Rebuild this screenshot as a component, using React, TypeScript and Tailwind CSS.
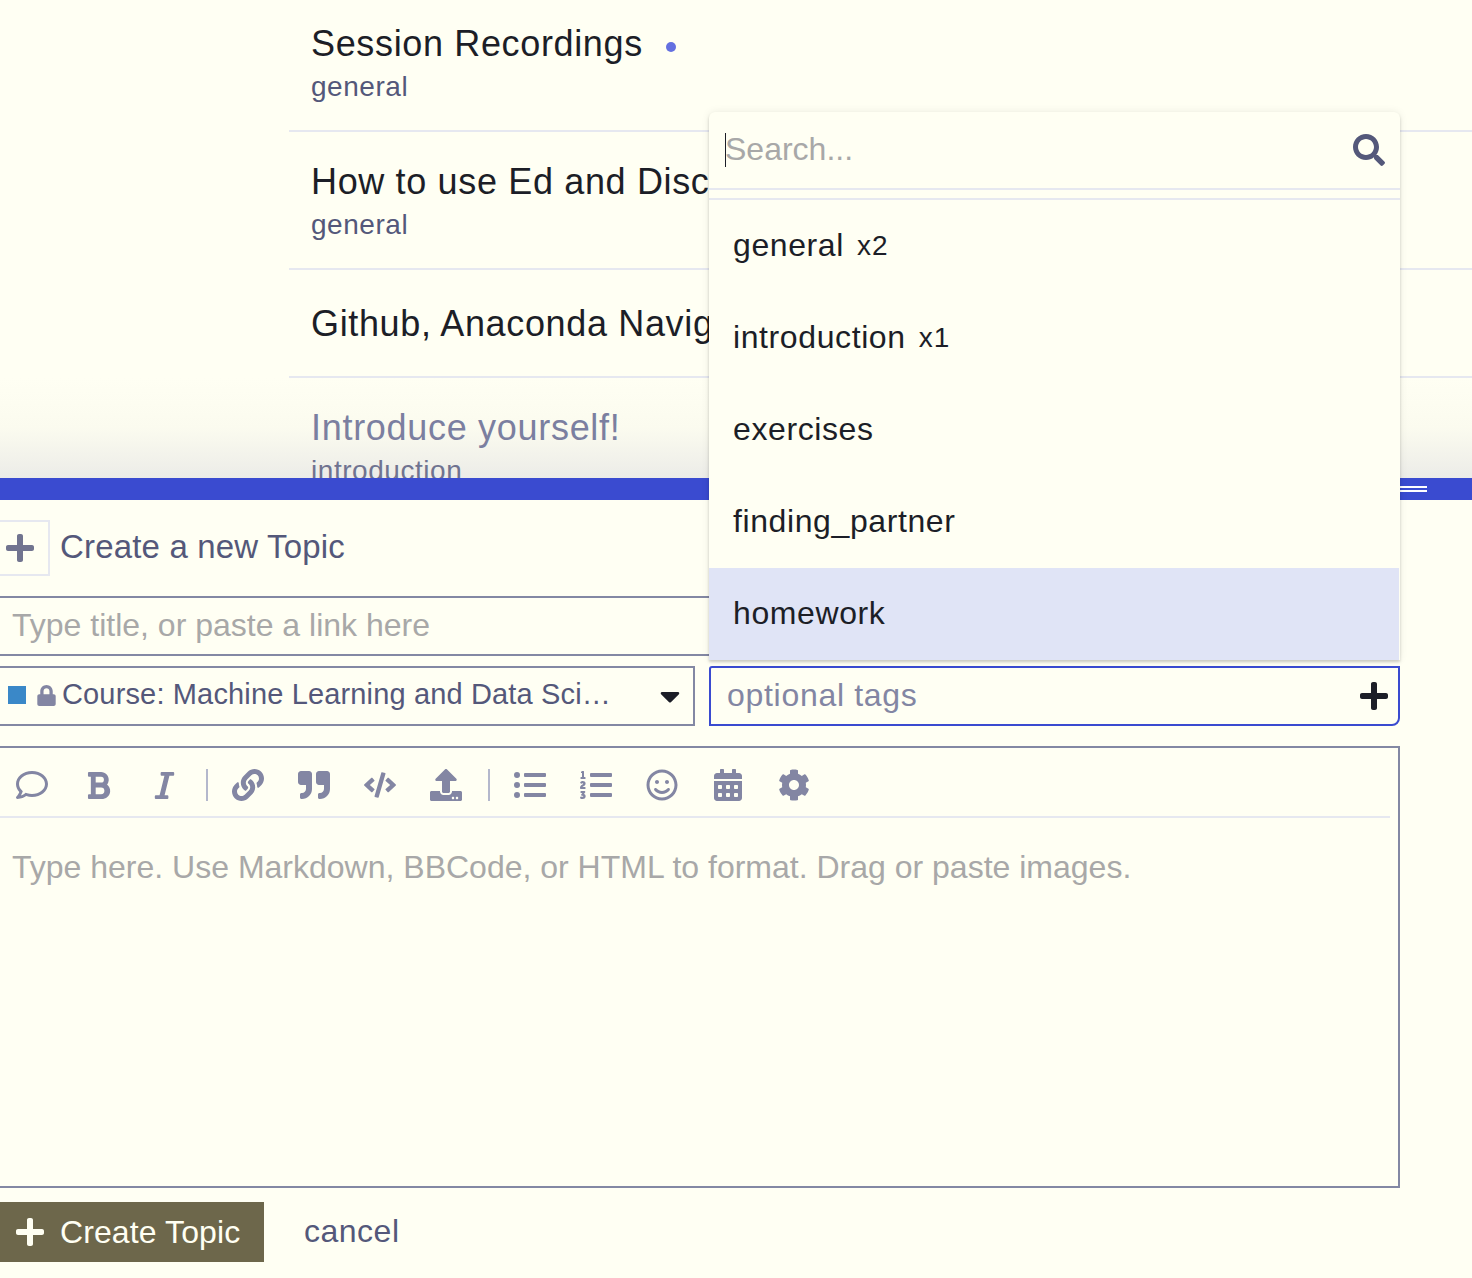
import type { ReactNode } from "react";
import {
  FaBold,
  FaCalendarAlt,
  FaCaretDown,
  FaCode,
  FaCog,
  FaItalic,
  FaLink,
  FaListOl,
  FaListUl,
  FaLock,
  FaPlus,
  FaQuoteRight,
  FaRegComment,
  FaRegSmile,
  FaSearch,
  FaUpload,
} from "react-icons/fa";

const tags = [
  { name: "general", count: "x2" },
  { name: "introduction", count: "x1" },
  { name: "exercises" },
  { name: "finding_partner" },
  { name: "homework", active: true },
];

const ToolButton = ({ children }: { children: ReactNode }) => (
  <button className="flex h-full w-[66px] items-center justify-center text-[#8386a3]">{children}</button>
);

const Separator = () => <div className="ml-[9px] mr-[7px] h-8 w-0.5 bg-[#b4b8cc]" />;

const TopicRow = ({ title, tag, unread, className }: { title: string; tag?: string; unread?: boolean; className: string }) => (
  <div className={`border-b-2 border-[#e6e8f0] pl-[22px] ${className}`}>
    <div className="flex items-center whitespace-nowrap text-[36px] leading-[46px] tracking-[0.65px] text-[#1c1e27]">
      {title}
      {unread && <span className="ml-[23px] mt-[6px] size-[10px] rounded-full bg-[#6470e0]" />}
    </div>
    {tag && <div className="mt-[3px] text-[28px] leading-[34px] tracking-[0.55px] text-[#54587a]">{tag}</div>}
  </div>
);

const App = () => {
  return (
    <div className="relative h-[1278px] w-[1472px] overflow-hidden bg-[#fffff3] font-['Liberation_Sans',Arial,sans-serif]">
      <div className="relative h-[478px] overflow-hidden pl-[289px]">
        <div className="absolute inset-x-0 bottom-0 h-[100px] bg-linear-to-b from-[#fffff3] via-[#fbfbef] to-[#ecece8]" />
        <TopicRow title="Session Recordings" tag="general" unread className="relative h-[132px] pt-[21px]" />
        <TopicRow title="How to use Ed and Discussion" tag="general" className="relative h-[138px] pt-[27px]" />
        <TopicRow title="Github, Anaconda Navigator" className="relative h-[108px] pt-[31px]" />
        <div className="relative pl-[22px] pt-[27px]">
          <div className="text-[36px] leading-[46px] tracking-[0.7px] text-[#7b7fa0]">Introduce yourself!</div>
          <div className="mt-[3px] text-[28px] leading-[34px] tracking-[0.55px] text-[#6f7390]">introduction</div>
        </div>
      </div>

      <div className="relative h-[22px] bg-[#3a4bd0]">
        <div className="absolute left-[1300px] top-[8px] h-[2px] w-[127px] bg-white" />
        <div className="absolute left-[1300px] top-[12px] h-[2px] w-[127px] bg-white" />
      </div>

      <div className="w-[1400px]">
        <div className="flex h-[96px] items-start pt-[20px]">
          <div className="flex h-14 w-[50px] items-center justify-center border-y-2 border-r-2 border-[#e6e8f0] pr-2 text-[#71748f]">
            <FaPlus size={32} />
          </div>
          <span className="ml-[10px] text-[33px] leading-[54px] tracking-[0.17px] text-[#54587a]">Create a new Topic</span>
        </div>

        <div className="flex h-[60px] items-center border-y-2 border-[#8388a3] pb-[2px] pl-3 text-[32px] text-[#a8a8a8]">
          Type title, or paste a link here
        </div>

        <div className="mt-[10px] flex h-[60px] gap-[14px]">
          <div className="flex w-[695px] items-center border-y-2 border-r-2 border-[#8388a3] pl-2 pr-[7px]">
            <span className="mb-[2px] size-[18px] shrink-0 bg-[#3a88c8]" />
            <FaLock size={21} className="mb-[2px] ml-[10px] shrink-0 text-[#8386a3]" />
            <span className="mb-[3px] ml-[5px] flex-1 truncate text-[29px] tracking-[0.15px] text-[#54587a]">
              Course: Machine Learning and Data Science
            </span>
            <FaCaretDown size={32} className="ml-[38px] shrink-0 text-[#1c1e27]" />
          </div>
          <div className="flex flex-1 items-center justify-between rounded-br-lg rounded-tl-[3px] border-2 border-[#3a4bd0] pl-4 pr-[8px]">
            <span className="mb-[2px] text-[32px] tracking-[0.7px] text-[#8386a3]">optional tags</span>
            <FaPlus size={32} className="text-[#1c1e27]" />
          </div>
        </div>

        <div className="mt-5 h-[442px] border-y-2 border-r-2 border-[#8388a3] pr-2">
          <div className="-ml-px flex h-[70px] items-center border-b-2 border-[#e6e8f0] pt-[6px]">
            <ToolButton><FaRegComment size={32} /></ToolButton>
            <ToolButton><FaBold size={31} /></ToolButton>
            <ToolButton><FaItalic size={31} /></ToolButton>
            <Separator />
            <ToolButton><FaLink size={32} /></ToolButton>
            <ToolButton><FaQuoteRight size={32} /></ToolButton>
            <ToolButton><FaCode size={32} /></ToolButton>
            <ToolButton><FaUpload size={32} /></ToolButton>
            <Separator />
            <ToolButton><FaListUl size={32} /></ToolButton>
            <ToolButton><FaListOl size={32} /></ToolButton>
            <ToolButton><FaRegSmile size={32} /></ToolButton>
            <ToolButton><FaCalendarAlt size={32} /></ToolButton>
            <ToolButton><FaCog size={32} /></ToolButton>
          </div>
          <div className="pl-3 pt-[29px] text-[32px] leading-10 text-[#a8a8a8]">
            Type here. Use Markdown, BBCode, or HTML to format. Drag or paste images.
          </div>
        </div>

        <div className="mt-[14px] flex items-center">
          <button className="flex h-[60px] w-[264px] items-center bg-[#6d674b] pl-[14px] text-[32px] text-[#fffff3]">
            <FaPlus size={32} />
            <span className="ml-[14px] tracking-[0.1px]">Create Topic</span>
          </button>
          <button className="mb-[2px] ml-10 text-[32px] tracking-[0.5px] text-[#54587a]">cancel</button>
        </div>
      </div>

      <div className="absolute left-[709px] top-[112px] h-[548px] w-[691px] rounded-t-md bg-[#fffff3] shadow-[0_2px_3px_rgba(0,0,0,0.18),0_0_8px_rgba(0,0,0,0.08)]">
        <div className="flex h-[78px] items-center justify-between border-b-2 border-[#e6e8f0] pl-4 pr-[15px]">
          <div className="flex h-9 items-center">
            <span className="h-[34px] w-px bg-[#1c1e27]" />
            <span className="-ml-px mb-[2px] text-[32px] leading-9 text-[#a8a8a8]">Search...</span>
          </div>
          <FaSearch size={32} className="text-[#54587a]" />
        </div>
        <div className="mt-2 border-t-2 border-[#e6e8f0]">
          {tags.map((tag) => (
            <div
              key={tag.name}
              className={`flex h-[92px] items-center pb-[2px] pl-6 text-[32px] tracking-[0.6px] text-[#1c1e27] ${tag.active ? "mr-px bg-[#e0e4f6]" : ""}`}
            >
              {tag.name}
              {tag.count && <span className="ml-[13px] mt-[2px] text-[28px] tracking-[1px]">{tag.count}</span>}
            </div>
          ))}
        </div>
      </div>
    </div>
  );
};

export default App;
